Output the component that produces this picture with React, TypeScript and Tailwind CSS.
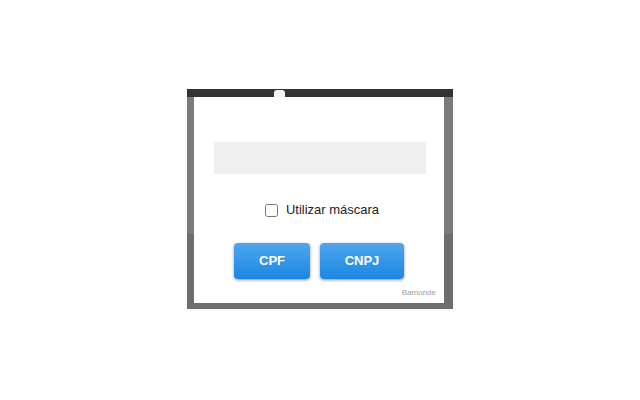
export default function App() {
  return (
    <div className="min-h-[400px] w-[640px] bg-white pt-[89px] pl-[187px] font-['Liberation_Sans',Arial,sans-serif]">
      {/* popup frame over the dimmed page */}
      <div className="flex w-[266px] flex-col bg-[linear-gradient(to_bottom,#7b7b7b_0,#7b7b7b_145px,#6e6e6e_145px)] pb-[6px]">
        <div className="relative h-[8px] bg-[#333333]">
          <div className="absolute left-[87px] top-[1px] h-[7px] w-[11px] rounded-t-[3px] bg-[#f4f4f4]" />
        </div>
        <div className="ml-[7px] flex h-[206px] w-[250px] flex-col bg-white">
          <div className="ml-[20px] mt-[45px] h-[32px] w-[212px] bg-[#efefef]" />
          <label className="mt-[28px] flex h-[16px] items-center justify-center gap-[8px] pl-[6px] text-[13px] text-[#222]">
            <input type="checkbox" className="m-0 h-[13px] w-[13px]" />
            <span>Utilizar máscara</span>
          </label>
          <div className="mt-[25px] flex justify-center gap-[10px]">
            <button className="h-[36px] w-[76px] rounded-[4px] bg-[linear-gradient(to_bottom,#4ea6ed,#1c86e4)] text-[13px] font-bold text-white shadow-[0_1px_3px_rgba(0,0,0,0.45)]">
              CPF
            </button>
            <button className="h-[36px] w-[84px] rounded-[4px] bg-[linear-gradient(to_bottom,#4ea6ed,#1c86e4)] text-[13px] font-bold text-white shadow-[0_1px_3px_rgba(0,0,0,0.45)]">
              CNPJ
            </button>
          </div>
          <div className="mt-[9px] pr-[8px] text-right text-[8px] leading-[10px] text-[#9c9ca8]">
            Bamonde
          </div>
        </div>
      </div>
    </div>
  )
}
